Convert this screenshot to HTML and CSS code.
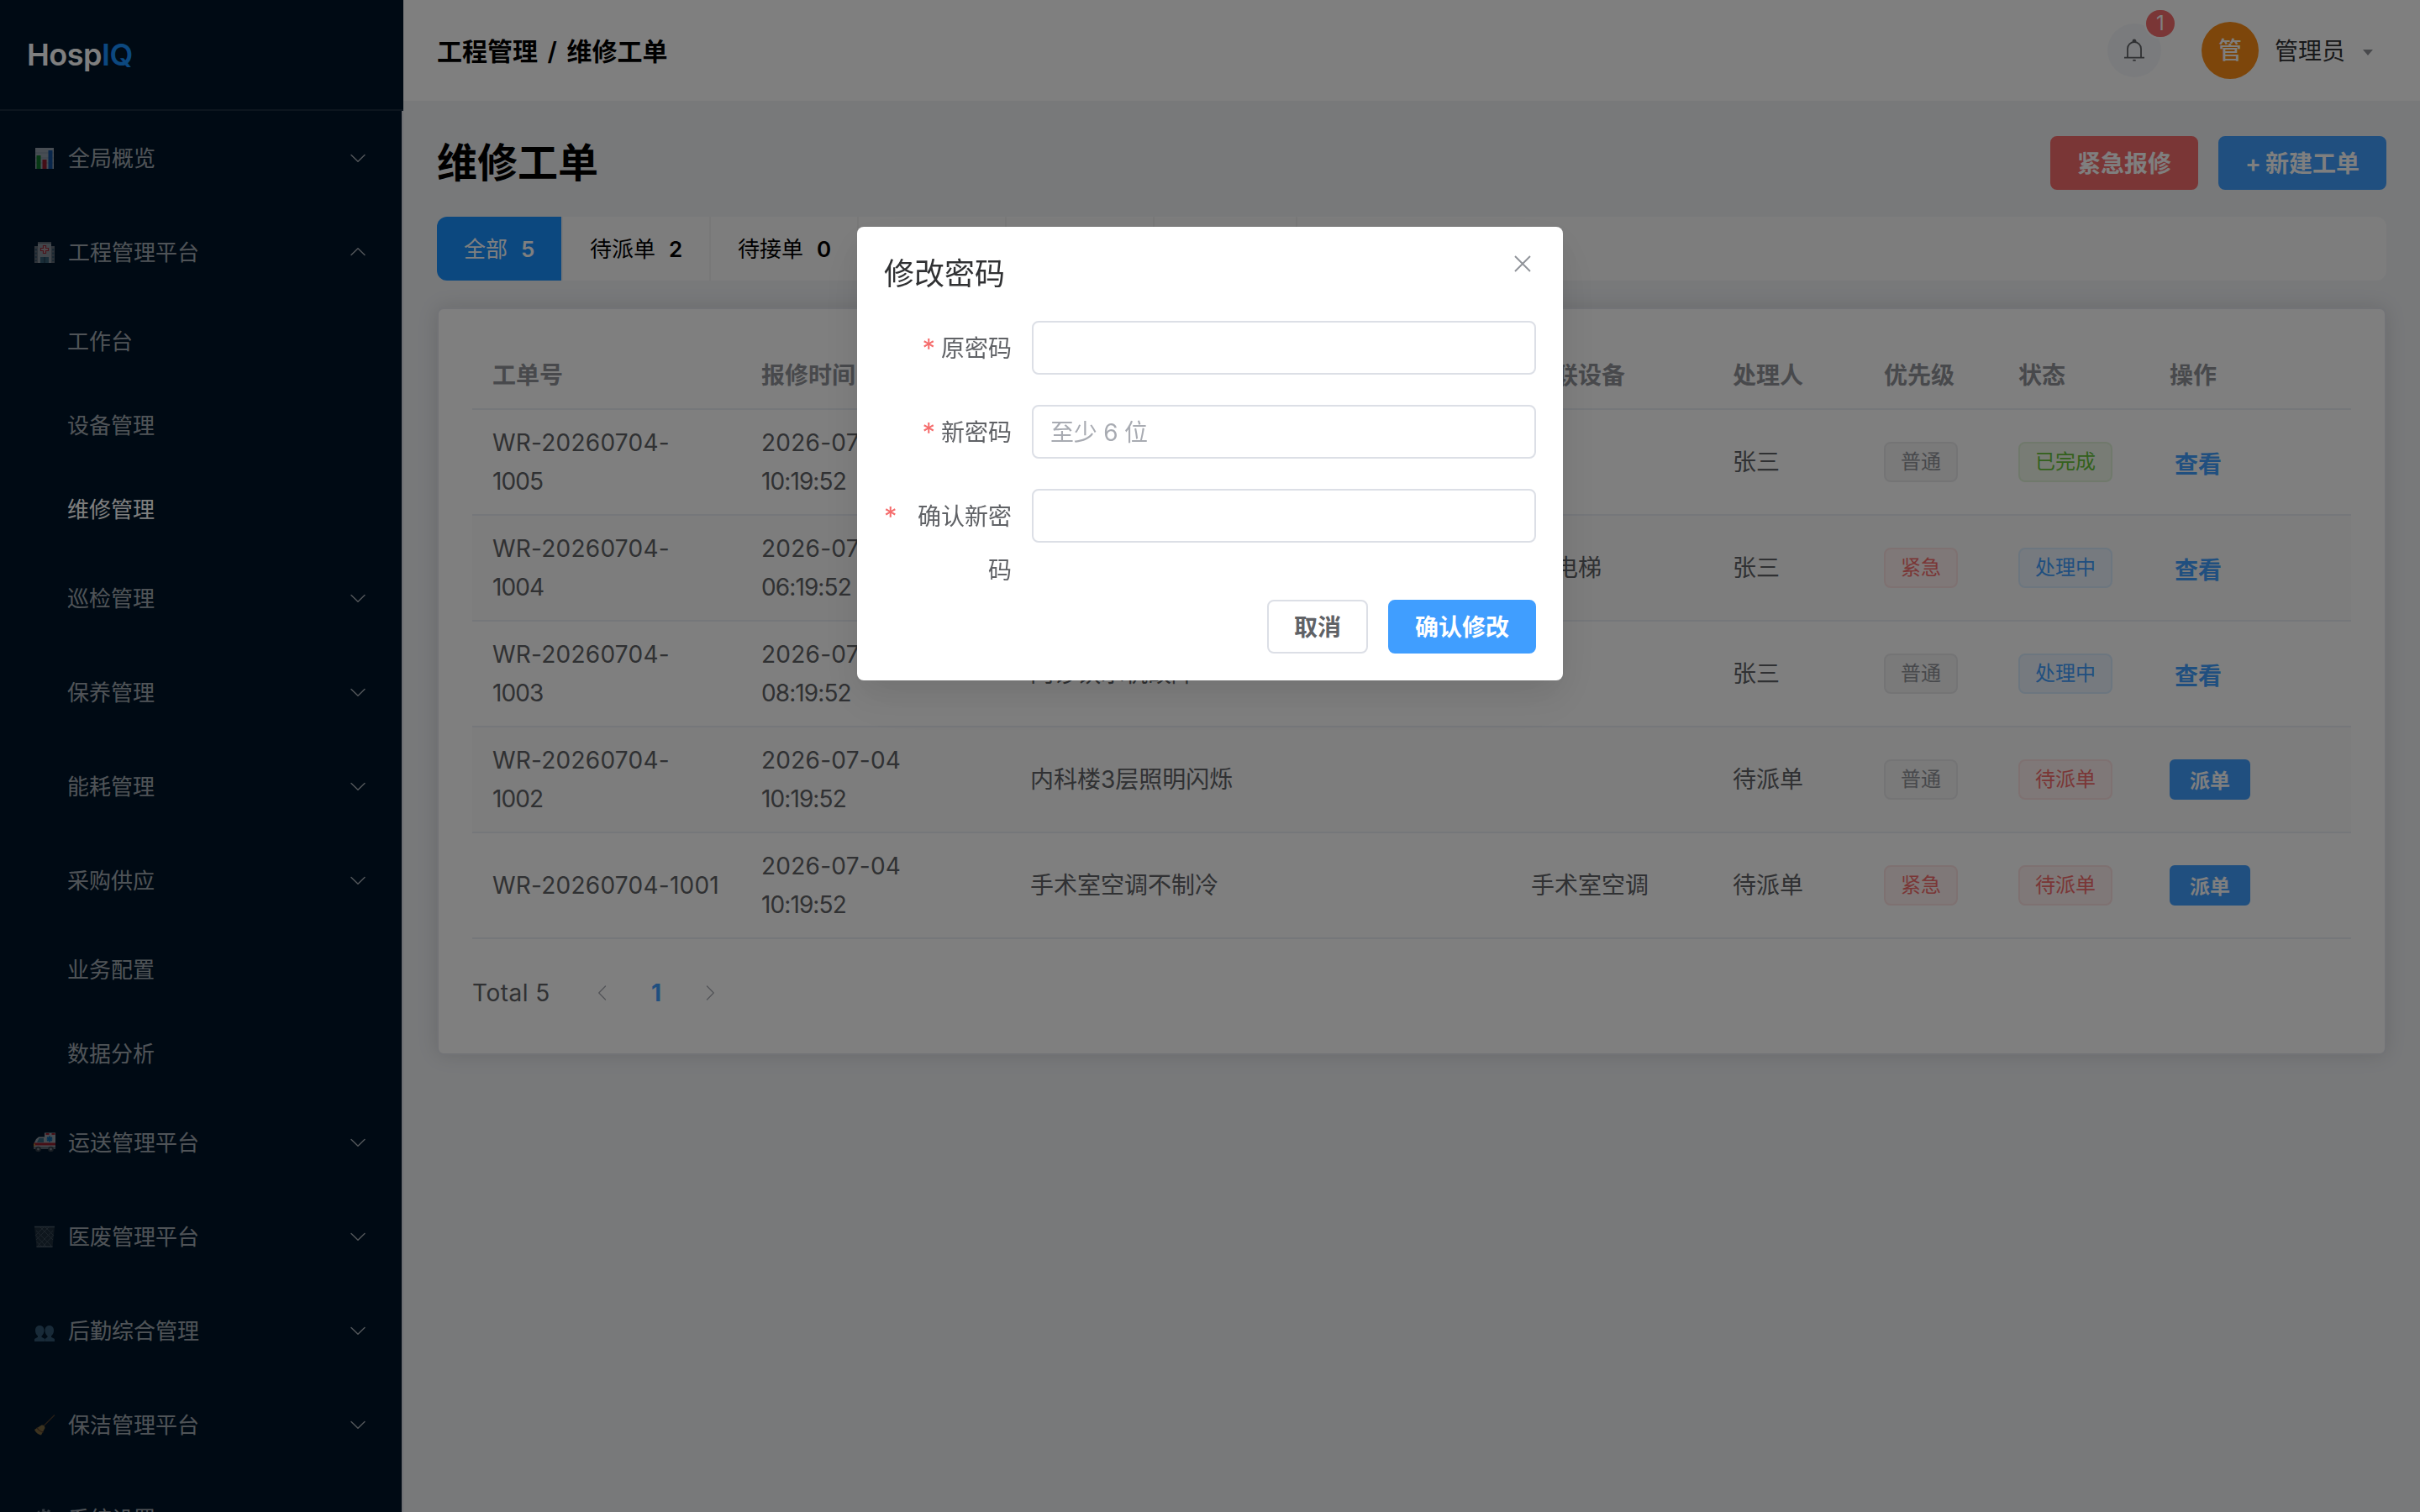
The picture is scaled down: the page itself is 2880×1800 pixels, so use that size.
FILE: index.html
```html
<!DOCTYPE html>
<html lang="zh-CN">

<head>
    <meta charset="UTF-8">
    <title>HospIQ - 维修工单</title>
    <link rel="stylesheet" href="styles.css">
</head>

<body>
    <!-- icons -->
    <svg class="sprite" width="0" height="0">
        <symbol id="down" viewBox="0 0 1024 1024">
            <path d="M831.872 340.864 512 652.672 192.128 340.864a30.592 30.592 0 0 0-42.752 0 29.12 29.12 0 0 0 0 41.6L489.664 714.24a32 32 0 0 0 44.672 0l340.288-331.712a29.12 29.12 0 0 0 0-41.728 30.592 30.592 0 0 0-42.752 0z" />
        </symbol>
    </svg>

    <div class="layout">
        <aside class="sidebar">
            <div class="logo">Hosp<span>IQ</span></div>
            <nav class="menu">
                <div class="menu-title">
                    <svg class="emoji" viewBox="0 0 26 26">
                        <rect x="2" y="1" width="22" height="25" fill="#dfe6ee" />
                        <path d="M2 7h22M2 13h22M2 19h22" stroke="#b8c4d2" />
                        <rect x="3.5" y="10" width="5" height="16" fill="#16a52b" />
                        <rect x="10.5" y="15" width="5" height="11" fill="#d3202e" />
                        <rect x="17.5" y="4" width="5" height="22" fill="#1d6fd6" />
                    </svg>
                    <span>全局概览</span>
                    <svg class="arrow"><use href="#down" /></svg>
                </div>
                <div class="menu-title">
                    <svg class="emoji" viewBox="0 0 26 26">
                        <path d="M1 6h24v20H1z" fill="#8f9499" />
                        <path d="M5 1h16v25H5z" fill="#c9cdd2" />
                        <path d="M5 1h16v2H5z" fill="#8b9197" />
                        <path d="M2.8 9v15M23.2 9v15" stroke="#486b82" stroke-width="2" stroke-dasharray="2.4 2" />
                        <path d="M11.5 5.5h3v3h3v3h-3v3h-3v-3h-3v-3h3z" fill="#f3dcdc" stroke="#e0323c" stroke-width="1.2" />
                        <path d="M8 19h10v7H8z" fill="#4d7f98" />
                        <path d="M13 19v7" stroke="#2b4655" />
                    </svg>
                    <span>工程管理平台</span>
                    <svg class="arrow up"><use href="#down" /></svg>
                </div>
                <div class="menu-item">工作台</div>
                <div class="menu-item">设备管理</div>
                <div class="menu-item active">维修管理</div>
                <div class="menu-title sub"><span>巡检管理</span><svg class="arrow"><use href="#down" /></svg></div>
                <div class="menu-title sub"><span>保养管理</span><svg class="arrow"><use href="#down" /></svg></div>
                <div class="menu-title sub"><span>能耗管理</span><svg class="arrow"><use href="#down" /></svg></div>
                <div class="menu-title sub"><span>采购供应</span><svg class="arrow"><use href="#down" /></svg></div>
                <div class="menu-item">业务配置</div>
                <div class="menu-item">数据分析</div>
                <div class="menu-title">
                    <svg class="emoji" viewBox="0 0 26 26">
                        <path d="M13 1.500h13V21H0v-6l3-6 3-2.500h7z" fill="#dcdfe3" />
                        <path d="M4 13l2.500-5H12v5z" fill="#4d8ea6" />
                        <path d="M0 13.500h26v3H0z" fill="#d8232f" />
                        <path d="M14.500 2h4v2h-4zM21.500 2h4v2h-4z" fill="#d8232f" />
                        <path d="M19 5.500v7M16 7.200l6 3.600M22 7.200l-6 3.600" stroke="#1489dc" stroke-width="2.200" />
                        <path d="M0 18h26v3H0z" fill="#8b9198" />
                        <circle cx="5.500" cy="21" r="3.300" fill="#4a4f55" />
                        <circle cx="20.500" cy="21" r="3.300" fill="#4a4f55" />
                        <circle cx="5.500" cy="21" r="1.400" fill="#b3b8bd" />
                        <circle cx="20.500" cy="21" r="1.400" fill="#b3b8bd" />
                        <path d="M0 14.500h2v3H0z" fill="#f3a73b" />
                    </svg>
                    <span>运送管理平台</span>
                    <svg class="arrow"><use href="#down" /></svg>
                </div>
                <div class="menu-title">
                    <svg class="emoji" viewBox="0 0 26 26">
                        <path d="M1 1.500h24L22.500 25.500h-19z" fill="#2d3a45" />
                        <path d="M3 6l18 18M2 11l13 14M3.500 19l6 6M8 2l15 15M14 2l9.500 9.500M23 6L5 24M24 11L11 25M18 2L3 17M12 2L2.500 11.500" stroke="#5d6a76" stroke-width=".9" />
                        <path d="M1 1.500h24M3.500 25.300h19" stroke="#6b7783" stroke-width="1.600" />
                    </svg>
                    <span>医废管理平台</span>
                    <svg class="arrow"><use href="#down" /></svg>
                </div>
                <div class="menu-title">
                    <svg class="emoji" viewBox="0 0 26 26" fill="#4a7896">
                        <path d="M7.200 7C3.800 7 2 9.500 2 12.700c0 3 1.300 5.500 3 6.800v1.200L1 23v3h12.500v-3l-4-2.300v-1.200c1.700-1.300 3-3.800 3-6.800C12.500 9.500 10.700 7 7.200 7z" />
                        <path d="M18.800 7c-3.500 0-5.300 2.500-5.300 5.700 0 3 1.300 5.500 3 6.800v1.200L13.500 23v3H25v-3l-4-2.300v-1.200c1.700-1.300 3-3.800 3-6.800C24 9.500 22.200 7 18.800 7z" />
                    </svg>
                    <span>后勤综合管理</span>
                    <svg class="arrow"><use href="#down" /></svg>
                </div>
                <div class="menu-title">
                    <svg class="emoji" viewBox="0 0 26 26">
                        <path d="M25 1.500L12 14.500" stroke="#7a4f2c" stroke-width="1.300" />
                        <path d="M9.500 13.500c2-.500 4 1 4 3.500L9 25.500c-3-.500-6.500-3-8-6.500z" fill="#b8924a" />
                        <path d="M4 16.500c1.500 2.800 4 4.800 7.500 5.500" stroke="#7c4a2a" stroke-width="1.400" fill="none" />
                    </svg>
                    <span>保洁管理平台</span>
                    <svg class="arrow"><use href="#down" /></svg>
                </div>
                <div class="menu-title">
                    <svg class="emoji" viewBox="0 0 26 26" fill="none" stroke="#9aa5b1">
                        <circle cx="13" cy="13" r="7.500" stroke-width="3" />
                        <circle cx="13" cy="13" r="10.300" stroke-width="3" stroke-dasharray="3.200 3.270" />
                        <circle cx="13" cy="13" r="2" stroke-width="2" />
                    </svg>
                    <span>系统设置</span>
                    <svg class="arrow"><use href="#down" /></svg>
                </div>
            </nav>
        </aside>

        <div class="main">
            <header class="header">
                <div class="crumb">工程管理 / 维修工单</div>
                <div class="user">
                    <div class="bell">
                        <svg viewBox="0 0 28 28" fill="none" stroke="#606266" stroke-width="1.800">
                            <path d="M6 22.500V12a8 8 0 0 1 16 0v10.500M2 22.600h24" />
                            <path d="M12.500 3a1.500 1.500 0 0 1 3 0z" fill="#606266" />
                            <path d="M12.300 25.800h3.400" />
                        </svg>
                        <span class="badge">1</span>
                    </div>
                    <div class="avatar">管</div>
                    <span class="name">管理员</span>
                    <svg class="caret" viewBox="0 0 12 7"><path d="M0 0h12L6 7z" /></svg>
                </div>
            </header>

            <main class="content">
                <div class="page-head">
                    <h1>维修工单</h1>
                    <div class="actions">
                        <button class="btn danger">紧急报修</button>
                        <button class="btn primary add">+ 新建工单</button>
                    </div>
                </div>

                <div class="tabs">
                    <div class="tab on">全部<b>5</b></div>
                    <div class="tab">待派单<b>2</b></div>
                    <div class="tab">待接单<b>0</b></div>
                    <div class="tab">处理中<b>2</b></div>
                    <div class="tab">待验收<b>0</b></div>
                    <div class="tab">已完成<b class="narrow">1</b></div>
                </div>

                <section class="card">
                    <table class="orders">
                        <colgroup>
                            <col class="c-no">
                            <col class="c-time">
                            <col class="c-title">
                            <col class="c-device">
                            <col class="c-person">
                            <col class="c-level">
                            <col class="c-status">
                            <col class="c-op">
                        </colgroup>
                        <thead>
                            <tr>
                                <th>工单号</th>
                                <th>报修时间</th>
                                <th>标题</th>
                                <th>关联设备</th>
                                <th>处理人</th>
                                <th>优先级</th>
                                <th>状态</th>
                                <th>操作</th>
                            </tr>
                        </thead>
                        <tbody>
                            <tr>
                                <td class="num">WR-20260704-<br>1005</td>
                                <td class="num">2026-07-04<br>10:19:52</td>
                                <td>病房水龙头漏水</td>
                                <td></td>
                                <td>张三</td>
                                <td><span class="tag info">普通</span></td>
                                <td><span class="tag success">已完成</span></td>
                                <td><a class="link">查看</a></td>
                            </tr>
                            <tr>
                                <td class="num">WR-20260704-<br>1004</td>
                                <td class="num">2026-07-04<br>06:19:52</td>
                                <td>电梯异响</td>
                                <td>客电梯</td>
                                <td>张三</td>
                                <td><span class="tag red">紧急</span></td>
                                <td><span class="tag blue">处理中</span></td>
                                <td><a class="link">查看</a></td>
                            </tr>
                            <tr>
                                <td class="num">WR-20260704-<br>1003</td>
                                <td class="num">2026-07-04<br>08:19:52</td>
                                <td>门诊饮水机故障</td>
                                <td></td>
                                <td>张三</td>
                                <td><span class="tag info">普通</span></td>
                                <td><span class="tag blue">处理中</span></td>
                                <td><a class="link">查看</a></td>
                            </tr>
                            <tr>
                                <td class="num">WR-20260704-<br>1002</td>
                                <td class="num">2026-07-04<br>10:19:52</td>
                                <td>内科楼3层照明闪烁</td>
                                <td></td>
                                <td>待派单</td>
                                <td><span class="tag info">普通</span></td>
                                <td><span class="tag red">待派单</span></td>
                                <td><button class="btn primary small">派单</button></td>
                            </tr>
                            <tr>
                                <td class="num">WR-20260704-1001</td>
                                <td class="num">2026-07-04<br>10:19:52</td>
                                <td>手术室空调不制冷</td>
                                <td>手术室空调</td>
                                <td>待派单</td>
                                <td><span class="tag red">紧急</span></td>
                                <td><span class="tag red">待派单</span></td>
                                <td><button class="btn primary small">派单</button></td>
                            </tr>
                        </tbody>
                    </table>
                    <div class="pager">
                        <span class="total">Total 5</span>
                        <span class="page"><svg class="prev"><use href="#down" /></svg></span>
                        <span class="page current">1</span>
                        <span class="page"><svg class="next"><use href="#down" /></svg></span>
                    </div>
                </section>
            </main>
        </div>
    </div>

    <div class="overlay">
        <div class="dialog">
            <div class="dialog-head">
                <span>修改密码</span>
                <svg class="close" viewBox="0 0 20 20"><path d="M1 1l18 18M19 1L1 19" /></svg>
            </div>
            <form class="form">
                <div class="field">
                    <label><i>*</i><span>原密码</span></label>
                    <input type="password">
                </div>
                <div class="field">
                    <label><i>*</i><span>新密码</span></label>
                    <input type="password" placeholder="至少 6 位">
                </div>
                <div class="field">
                    <label><i>*</i><span>确认新密码</span></label>
                    <input type="password">
                </div>
            </form>
            <div class="dialog-foot">
                <button class="btn plain">取消</button>
                <button class="btn primary">确认修改</button>
            </div>
        </div>
    </div>
</body>

</html>
```

FILE: styles.css
```css
* {
    box-sizing: border-box;
}

body {
    margin: 0;
    height: 1800px;
    overflow: hidden;
    font-family: Inter, "Noto Sans CJK SC", sans-serif;
    font-size: 28px;
    color: #303133;
    background-color: #f0f2f5;
}

.sprite {
    display: none;
}

.layout {
    display: flex;
    height: 1800px;
    overflow: hidden;
}

/* sidebar */

.sidebar {
    width: 480px;
    flex-shrink: 0;
    height: 1800px;
    overflow: hidden;
}

.logo {
    height: 132px;
    padding-left: 32px;
    line-height: 130px;
    font-size: 36px;
    font-weight: 600;
    letter-spacing: -0.5px;
    color: #fff;
    background-color: #001529;
    border-bottom: 2px solid #1a2c3e;
}

.logo span {
    color: #1890ff;
}

.menu {
    background-color: #001529;
    border-right: 2px solid #dcdfe6;
    font-size: 26px;
    color: rgba(255, 255, 255, 0.65);
}

.menu-title {
    display: flex;
    align-items: center;
    height: 112px;
    padding: 0 40px;
}

.menu-title span {
    flex: 1;
    padding-bottom: 3px;
}

.menu-title.sub {
    padding-left: 80px;
}

.menu-item {
    height: 100px;
    padding-left: 80px;
    line-height: 102px;
}

.menu-item.active {
    color: #fff;
}

.emoji {
    width: 26px;
    height: 26px;
    margin-right: 15px;
    opacity: 0.65;
}

.arrow {
    width: 24px;
    height: 24px;
    fill: currentColor;
}

.arrow.up {
    transform: rotate(180deg);
}

/* header */

.main {
    flex: 1;
}

.header {
    display: flex;
    align-items: center;
    justify-content: space-between;
    height: 120px;
    padding: 0 40px;
    background-color: #fff;
}

.crumb {
    padding-bottom: 2px;
    font-size: 30px;
    font-weight: 600;
    word-spacing: 4px;
    color: #000;
}

.user {
    display: flex;
    align-items: center;
}

.bell {
    position: relative;
    display: flex;
    align-items: center;
    justify-content: center;
    width: 64px;
    height: 64px;
    margin-right: 48px;
    border-radius: 50%;
    background-color: #f5f7fa;
}

.bell svg {
    width: 28px;
    height: 28px;
}

.badge {
    position: absolute;
    top: -18px;
    right: -18px;
    width: 38px;
    height: 36px;
    line-height: 32px;
    text-align: center;
    font-size: 24px;
    color: #fff;
    border: 2px solid #fff;
    border-radius: 18px;
    background-color: #f56c6c;
}

.avatar {
    width: 68px;
    height: 68px;
    line-height: 68px;
    text-align: center;
    font-weight: 500;
    color: #fff;
    border-radius: 50%;
    background-color: #fa8c16;
}

.name {
    margin: 0 19px;
    padding-bottom: 2px;
}

.caret {
    width: 12px;
    height: 7px;
    margin: 4px 16px 0 2px;
    fill: #909399;
}

/* page */

.content {
    padding: 40px;
}

.page-head {
    display: flex;
    align-items: center;
    justify-content: space-between;
    height: 66px;
    margin-bottom: 32px;
}

h1 {
    margin: 0;
    padding-bottom: 6px;
    font-size: 48px;
    font-weight: 600;
    color: #000;
}

.actions {
    display: flex;
    gap: 24px;
    padding-top: 2px;
}

.btn {
    height: 64px;
    padding: 0 30px 2px;
    font-family: inherit;
    font-size: 28px;
    font-weight: 600;
    color: #fff;
    border: 2px solid transparent;
    border-radius: 8px;
    white-space: nowrap;
}

.btn.primary {
    background-color: #409eff;
    border-color: #409eff;
}

.btn.danger {
    background-color: #f56c6c;
    border-color: #f56c6c;
}

.btn.plain {
    color: #606266;
    background-color: #fff;
    border-color: #dcdfe6;
}

.btn.add {
    width: 200px;
    padding: 0 0 2px;
    word-spacing: -2px;
}

.btn.small {
    display: block;
    height: 48px;
    padding: 0 22px 2px;
    font-size: 24px;
    border-radius: 6px;
}

.tabs {
    display: flex;
    height: 76px;
    margin-bottom: 32px;
    overflow: hidden;
    border-radius: 12px;
    background-color: #fafafa;
}

.tab {
    padding: 0 32px;
    line-height: 78px;
    font-size: 26px;
    color: #000;
    border-right: 2px solid #f0f0f0;
}

.tab b {
    display: inline-block;
    width: 16px;
    margin-left: 16px;
    font-weight: 600;
}

.tab b.narrow {
    width: 10px;
}

.tab.on {
    color: #fff;
    background-color: #1890ff;
    background-clip: padding-box;
}

.card {
    height: 890px;
    padding: 40px;
    border: 2px solid #e4e7ed;
    border-radius: 8px;
    background-color: #fff;
    box-shadow: 0 0 24px rgba(0, 0, 0, 0.12);
}

/* table */

.orders {
    width: 100%;
    table-layout: fixed;
    border-collapse: separate;
    border-spacing: 0;
    line-height: 46px;
    color: #606266;
}

.c-no,
.c-time {
    width: 320px;
}

.c-title {
    width: 596px;
}

.c-device,
.c-op {
    width: 240px;
}

.c-person,
.c-status {
    width: 180px;
}

.c-level {
    width: 160px;
}

.orders th,
.orders td {
    padding: 16px 24px;
    text-align: left;
    border-bottom: 2px solid #ebeef5;
}

.orders td {
    height: 126px;
}

.orders .num {
    letter-spacing: -0.9px;
}

.orders .num::first-line {
    letter-spacing: 0.25px;
}

.orders th {
    height: 80px;
    font-weight: 600;
    color: #909399;
}

.orders tbody tr:nth-child(even) td {
    background-color: #fafafa;
}

.tag {
    display: block;
    width: fit-content;
    height: 48px;
    padding: 0 18px;
    line-height: 44px;
    font-size: 24px;
    border: 2px solid;
    border-radius: 8px;
}

.tag.info {
    color: #909399;
    background-color: #f4f4f5;
    border-color: #e9e9eb;
}

.tag.success {
    color: #67c23a;
    background-color: #f0f9eb;
    border-color: #e1f3d8;
}

.tag.red {
    color: #f56c6c;
    background-color: #fef0f0;
    border-color: #fde2e2;
}

.tag.blue {
    color: #409eff;
    background-color: #ecf5ff;
    border-color: #d9ecff;
}

.link {
    display: block;
    padding: 5px 6px 0;
    font-weight: 600;
    color: #409eff;
}

.pager {
    display: flex;
    align-items: center;
    height: 64px;
    margin-top: 32px;
    color: #606266;
}

.total {
    width: 123px;
    letter-spacing: 0.5px;
}

.page {
    display: flex;
    align-items: center;
    justify-content: center;
    width: 64px;
    height: 64px;
}

.page svg {
    width: 24px;
    height: 24px;
    fill: #a8abb2;
}

.page.current {
    font-weight: 700;
    color: #409eff;
}

.prev {
    transform: rotate(90deg);
}

.next {
    transform: rotate(-90deg);
}

/* dialog */

.overlay {
    position: fixed;
    inset: 0;
    padding-top: 270px;
    background-color: rgba(0, 0, 0, 0.5);
}

.dialog {
    width: 840px;
    height: 540px;
    margin: 0 auto;
    padding: 32px;
    border-radius: 8px;
    background-color: #fff;
    box-shadow: 0 24px 64px 8px rgba(0, 0, 0, 0.04), 0 16px 40px rgba(0, 0, 0, 0.08);
}

.dialog-head {
    display: flex;
    justify-content: space-between;
    height: 80px;
    line-height: 48px;
    font-size: 36px;
}

.close {
    width: 20px;
    height: 20px;
    margin: 2px 6px 0 0;
    fill: none;
    stroke: #909399;
    stroke-width: 1.9;
}

.field {
    display: flex;
    height: 64px;
    margin-bottom: 36px;
}

.field label {
    display: flex;
    justify-content: flex-end;
    width: 176px;
    padding: 1px 24px 0 0;
    line-height: 64px;
    text-align: right;
    color: #606266;
}

.field i {
    margin-right: 7px;
    font-size: 31px;
    font-style: normal;
    color: #f56c6c;
}

.field input {
    flex: 1;
    height: 64px;
    padding: 1px 20px 0;
    font-family: inherit;
    font-size: 28px;
    letter-spacing: -0.2px;
    border: 2px solid #dcdfe6;
    border-radius: 8px;
}

.field input::placeholder {
    color: #a8abb2;
}

.dialog-foot {
    display: flex;
    justify-content: flex-end;
    gap: 24px;
    padding-top: 32px;
}
```
